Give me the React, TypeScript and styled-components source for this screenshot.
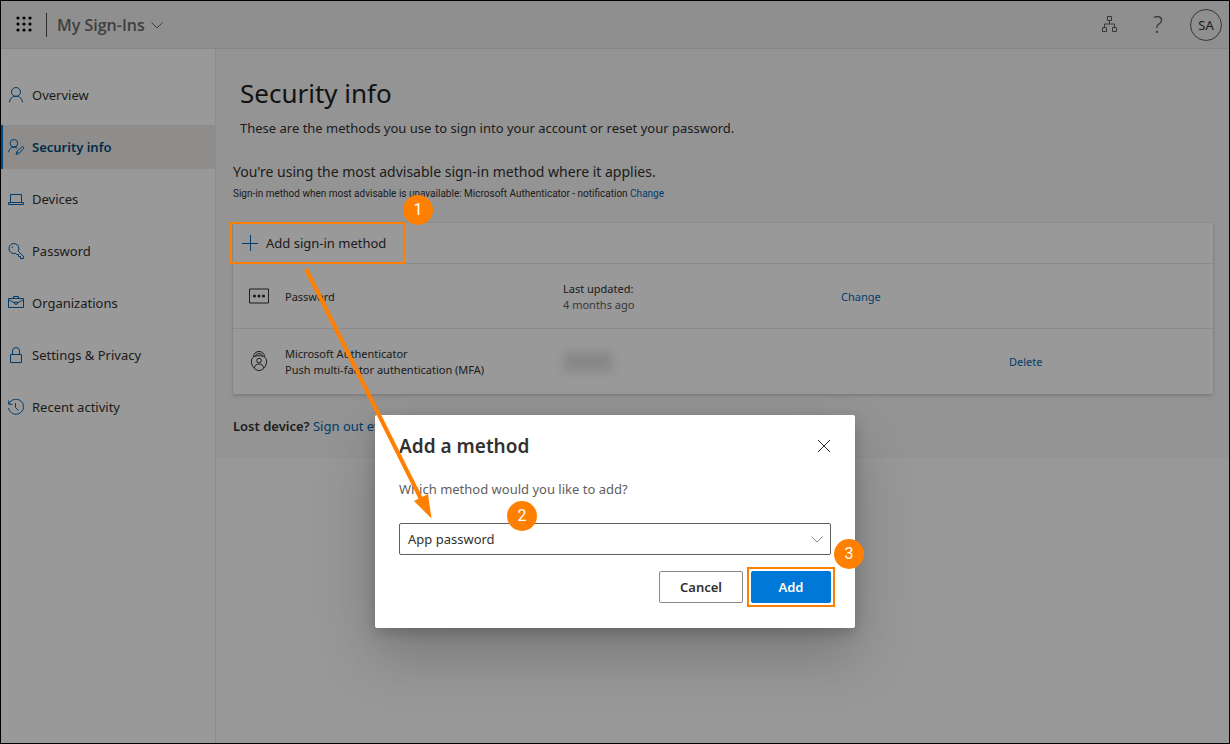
import React from "react";
import styled, { createGlobalStyle, css } from "styled-components";

const blue = "#0067b8";
const orange = "#ff8000";

const GlobalStyle = createGlobalStyle`
  * { box-sizing: border-box; }
  body {
    margin: 0;
    font-family: "Noto Sans", "Open Sans", sans-serif;
    font-size: 13px;
    line-height: 20px;
    color: #323130;
  }
  button, select, input { font: inherit; color: inherit; }
  h1, h2, p { margin: 0; font-weight: 400; }
  a { color: ${blue}; text-decoration: none; }
`;

const Frame = styled.div`
  position: relative;
  display: flex;
  flex-direction: column;
  min-height: 100vh;
  border: 1px solid #000;
  background: #fefefe;
`;

const IconButton = styled.button`
  display: flex;
  align-items: center;
  justify-content: center;
  width: 48px;
  height: 46px;
  padding: 0;
  border: 0;
  background: none;
  cursor: pointer;
`;

const Header = styled.header`
  display: flex;
  align-items: center;
  height: 48px;
  border-bottom: 1px solid #e1e1e1;
  background: #eeeeee;
  padding-right: 7px;
`;

const HeaderIconButton = styled(IconButton)`
  align-self: flex-start;
  color: #605e5c;
`;

const Launcher = styled(HeaderIconButton)`
  width: 45px;
  color: #000;
`;

const HeaderDivider = styled.span`
  width: 1px;
  height: 24px;
  background: #4a4a4a;
`;

const AppSwitcher = styled.button`
  display: flex;
  align-items: center;
  gap: 6px;
  margin-right: auto;
  padding: 0 10px;
  border: 0;
  background: none;
  font-family: "Open Sans", sans-serif;
  font-size: 16px;
  font-weight: 600;
  color: #6c6a68;
  svg { margin-top: 2px; }
`;

const HelpButton = styled(HeaderIconButton)`
  font-size: 23px;
  font-weight: 300;
`;

const Avatar = styled.button`
  width: 32px;
  height: 32px;
  margin-left: 8px;
  padding: 0;
  border: 1px solid #605e5c;
  border-radius: 50%;
  background: none;
  font-size: 13px;
`;

const Body = styled.div`
  display: flex;
  flex: 1;
`;

const Sidebar = styled.nav`
  display: flex;
  flex-direction: column;
  flex: none;
  gap: 8px;
  width: 215px;
  padding-top: 24px;
  border-right: 1px solid #ececec;
  background: #fff;
`;

const NavItem = styled.a<{ $active?: boolean }>`
  display: flex;
  align-items: center;
  gap: 8px;
  height: 44px;
  padding-left: 7px;
  color: #323130;
  ${(p) =>
    p.$active &&
    css`
      padding-left: 5px;
      border-left: 2px solid #0078d4;
      background: #edebe9;
      font-weight: 600;
      color: #004a7c;
    `}
  svg { flex: none; color: #0065b3; }
`;

const Main = styled.main`
  flex: 1;
  min-width: 0;
`;

const Content = styled.div`
  padding: 24px 16px 22px 17px;
  background: #f7f7f7;
`;

const PageHeading = styled.div`
  padding-left: 7px;
`;

const Title = styled.h1`
  font-size: 26px;
  line-height: 40px;
  color: #201f1e;
`;

const Lead = styled.p`
  margin-top: 5px;
  line-height: 20px;
`;

const Recommendation = styled.p`
  margin-top: 24px;
  font-size: 14px;
  line-height: 20px;
`;

const SmallNote = styled.p`
  margin-top: 4px;
  font-family: Roboto, sans-serif;
  font-size: 10px;
  line-height: 16px;
`;

const Card = styled.section`
  margin-top: 21px;
  background: #fff;
  box-shadow: 0 2px 4px rgba(0, 0, 0, 0.14), 0 0 2px rgba(0, 0, 0, 0.12);
`;

const AddMethodButton = styled.button`
  display: flex;
  align-items: center;
  gap: 8px;
  height: 40px;
  padding: 0 14px 0 9px;
  border: 0;
  background: none;
  svg { color: #0065b3; }
`;

const MethodTable = styled.table`
  width: 100%;
  border-collapse: collapse;
  table-layout: fixed;
  font-size: 11px;
  line-height: 16px;
  td {
    height: 65px;
    padding: 2px 0 0;
    border-top: 1px solid #e8e8e8;
  }
  td:first-child { padding: 0 0 0 16px; }
  svg { display: block; }
`;

const Muted = styled.span`
  color: #605e5c;
`;

const Redacted = styled.span`
  display: block;
  width: 50px;
  height: 20px;
  background: #e2e2e2;
  filter: blur(5px);
`;

const LostDevice = styled.p`
  margin-top: 22px;
  b { font-weight: 600; }
`;

const Scrim = styled.div`
  position: absolute;
  inset: 0;
  display: flex;
  justify-content: center;
  align-items: flex-start;
  padding-top: 414px;
  background: rgba(0, 0, 0, 0.4);
`;

const Dialog = styled.section`
  position: relative;
  width: 480px;
  padding: 16px 24px 25px;
  border-radius: 2px;
  background: #fff;
  box-shadow: 0 26px 58px rgba(0, 0, 0, 0.22), 0 5px 14px rgba(0, 0, 0, 0.18);
`;

const DialogHeader = styled.div`
  display: flex;
  align-items: center;
  justify-content: space-between;
  height: 30px;
`;

const DialogTitle = styled.h2`
  font-size: 19px;
  font-weight: 600;
  line-height: 28px;
`;

const CloseButton = styled(IconButton)`
  width: 14px;
  height: 30px;
`;

const DialogLabel = styled.label`
  display: block;
  margin: 18px 0 24px;
  color: #605e5c;
`;

const SelectBox = styled.div`
  display: grid;
  align-items: center;
  select {
    grid-area: 1 / 1;
    width: 100%;
    height: 32px;
    padding: 0 32px 0 8px;
    border: 1px solid #605e5c;
    border-radius: 2px;
    background: #fff;
    appearance: none;
  }
  svg {
    grid-area: 1 / 1;
    justify-self: end;
    margin-right: 8px;
    pointer-events: none;
    color: #8a8886;
  }
`;

const DialogActions = styled.div`
  display: flex;
  justify-content: flex-end;
  gap: 8px;
  margin-top: 16px;
`;

const ActionButton = styled.button<{ $primary?: boolean }>`
  height: 32px;
  width: ${(p) => (p.$primary ? 80 : 84)}px;
  padding: 0;
  border: 1px solid ${(p) => (p.$primary ? "#0078d7" : "#8a8886")};
  border-radius: 2px;
  background: ${(p) => (p.$primary ? "#0078d7" : "#fff")};
  color: ${(p) => (p.$primary ? "#fff" : "#323130")};
  font-weight: 600;
`;

const Annotations = styled.div`
  position: absolute;
  inset: 0;
  pointer-events: none;
  svg { position: absolute; left: 0; top: 0; }
`;

const Highlight = styled.span<{ $x: number; $y: number; $w: number; $h: number }>`
  position: absolute;
  left: ${(p) => p.$x}px;
  top: ${(p) => p.$y}px;
  width: ${(p) => p.$w}px;
  height: ${(p) => p.$h}px;
  border: 2px solid ${orange};
`;

const StepPin = styled.span<{ $x: number; $y: number }>`
  position: absolute;
  left: ${(p) => p.$x}px;
  top: ${(p) => p.$y}px;
  width: 30px;
  height: 30px;
  border-radius: 50%;
  background: ${orange};
  color: #fff;
  font-family: Roboto, sans-serif;
  font-size: 16px;
  line-height: 30px;
  text-align: center;
`;

type IconProps = { size?: number; children: React.ReactNode };

const Icon = ({ size = 16, children }: IconProps) => (
  <svg width={size} height={size} viewBox={`0 0 ${size} ${size}`} fill="none" stroke="currentColor" strokeWidth="1" aria-hidden="true">
    {children}
  </svg>
);

const PersonIcon = () => (
  <Icon>
    <circle cx="8" cy="5" r="4.5" />
    <path d="M1.5 15.5a6.5 6.5 0 0 1 13 0" />
  </Icon>
);

const PersonEditIcon = () => (
  <Icon>
    <circle cx="5.9" cy="4.3" r="3.8" />
    <path d="M.5 13.2A5.5 5.5 0 0 1 9.4 9.3" />
    <path d="M8 15.4l.8-2.8 5-4.6a1.2 1.2 0 0 1 1.7 1.8l-4.8 4.8zM8.8 12.6l1.9 2" />
  </Icon>
);

const LaptopIcon = () => (
  <Icon>
    <path d="M2.5 11.5v-8h11v8M.5 13.5v-2h15v2z" />
  </Icon>
);

const KeyIcon = () => (
  <Icon>
    <path d="M10.2 8.1L15.5 13.3v2.2h-3v-2h-2v-2h-2L7.4 10.3A5 5 0 1 1 10.2 8.1z" />
    <circle cx="4.2" cy="4.2" r=".7" fill="currentColor" stroke="none" />
  </Icon>
);

const BriefcaseIcon = () => (
  <Icon>
    <path d="M.5 3.5h15v9H.5zM5.5 3.5v-2h5v2M.5 4.7l5.8 3.1M15.5 4.7L9.7 7.8M6.3 7.2h3.4v.8a1.7 1.3 0 0 1-3.4 0z" />
  </Icon>
);

const LockIcon = () => (
  <Icon>
    <path d="M2.5 7.5h11v8h-11zM4.5 7.5V4a3.5 3.5 0 0 1 7 0v3.5" />
  </Icon>
);

const HistoryIcon = () => (
  <Icon>
    <path d="M1 5A7.5 7.5 0 1 1 .6 9M.7 1.5v3.8h3.8M7.5 4v4.5l3 3" />
  </Icon>
);

const ChevronIcon = () => (
  <svg width="12" height="7" viewBox="0 0 12 7" fill="none" stroke="currentColor" aria-hidden="true">
    <path d="M.5.5L6 6 11.5.5" />
  </svg>
);

const WaffleIcon = () => (
  <Icon>
    <g fill="currentColor" stroke="none">
      {[2, 8, 14].map((y) => [2, 8, 14].map((x) => <circle key={`${x}-${y}`} cx={x} cy={y} r="1.6" />))}
    </g>
  </Icon>
);

const OrgIcon = () => (
  <Icon>
    <path d="M5.5 .5h4v4h-4zM.5 11.500h4v4h-4zM10.500 11.500h4v4h-4zM7.500 4.500v3.500M2.500 11.500V8h10v3.500" />
  </Icon>
);

const PlusIcon = () => (
  <Icon>
    <path d="M8.5 0v16M0 8.5h16" />
  </Icon>
);

const PasswordIcon = () => (
  <svg width="20" height="16" viewBox="0 0 20 16" fill="none" stroke="currentColor" aria-hidden="true">
    <path d="M.5 1h19v14H.5z" />
    <g fill="currentColor" stroke="none">
      <circle cx="5.5" cy="8" r="1.6" />
      <circle cx="10" cy="8" r="1.6" />
      <circle cx="14.5" cy="8" r="1.6" />
    </g>
  </svg>
);

const AuthenticatorIcon = () => (
  <Icon size={20}>
    <path d="M4.300 5.800C4.800 2.500 7 .5 10 .5s5.200 2 5.700 5.300" />
    <path d="M6.300 5C6.900 3.500 8.200 2.700 10 2.700s3.100.8 3.700 2.300" />
    <path d="M10 4.700c4.500 0 7.600 2 7.600 5.400 0 4.900-3.400 9.400-7.600 9.400S2.400 15 2.400 10.100c0-3.400 3.100-5.400 7.600-5.400z" />
    <circle cx="10" cy="9.600" r="2.300" />
    <path d="M5.200 17c.6-2.600 2.400-4 4.800-4s4.200 1.400 4.800 4" />
  </Icon>
);

const CloseIcon = () => (
  <Icon size={14}>
    <path d="M1 1l12 12M13 1L1 13" />
  </Icon>
);

const navItems = [
  { label: "Overview", icon: <PersonIcon /> },
  { label: "Security info", icon: <PersonEditIcon />, active: true },
  { label: "Devices", icon: <LaptopIcon /> },
  { label: "Password", icon: <KeyIcon /> },
  { label: "Organizations", icon: <BriefcaseIcon /> },
  { label: "Settings & Privacy", icon: <LockIcon /> },
  { label: "Recent activity", icon: <HistoryIcon /> },
];

export default function App() {
  return (
    <Frame>
      <GlobalStyle />
      <Header>
        <Launcher aria-label="App launcher"><WaffleIcon /></Launcher>
        <HeaderDivider />
        <AppSwitcher>My Sign-Ins <ChevronIcon /></AppSwitcher>
        <HeaderIconButton aria-label="Organizations"><OrgIcon /></HeaderIconButton>
        <HelpButton aria-label="Help">?</HelpButton>
        <Avatar>SA</Avatar>
      </Header>
      <Body>
        <Sidebar>
          {navItems.map((item) => (
            <NavItem key={item.label} href="#" $active={item.active}>
              {item.icon}
              {item.label}
            </NavItem>
          ))}
        </Sidebar>
        <Main>
          <Content>
            <PageHeading>
              <Title>Security info</Title>
              <Lead>These are the methods you use to sign into your account or reset your password.</Lead>
            </PageHeading>
            <Recommendation>You're using the most advisable sign-in method where it applies.</Recommendation>
            <SmallNote>
              Sign-in method when most advisable is unavailable: Microsoft Authenticator - notification <a href="#">Change</a>
            </SmallNote>
            <Card>
              <AddMethodButton><PlusIcon />Add sign-in method</AddMethodButton>
              <MethodTable>
                <colgroup>
                  <col width="52" />
                  <col width="278" />
                  <col width="278" />
                  <col width="168" />
                  <col />
                </colgroup>
                <tbody>
                  <tr>
                    <td><PasswordIcon /></td>
                    <td>Password</td>
                    <td>Last updated:<br /><Muted>4 months ago</Muted></td>
                    <td><a href="#">Change</a></td>
                    <td />
                  </tr>
                  <tr>
                    <td><AuthenticatorIcon /></td>
                    <td>Microsoft Authenticator<br />Push multi-factor authentication (MFA)</td>
                    <td><Redacted /></td>
                    <td />
                    <td><a href="#">Delete</a></td>
                  </tr>
                </tbody>
              </MethodTable>
            </Card>
            <LostDevice><b>Lost device?</b> <a href="#">Sign out everywhere</a></LostDevice>
          </Content>
        </Main>
      </Body>
      <Scrim>
        <Dialog role="dialog" aria-labelledby="dialog-title">
          <DialogHeader>
            <DialogTitle id="dialog-title">Add a method</DialogTitle>
            <CloseButton aria-label="Close"><CloseIcon /></CloseButton>
          </DialogHeader>
          <DialogLabel htmlFor="method">Which method would you like to add?</DialogLabel>
          <SelectBox>
            <select id="method" defaultValue="App password">
              <option>App password</option>
            </select>
            <ChevronIcon />
          </SelectBox>
          <DialogActions>
            <ActionButton>Cancel</ActionButton>
            <ActionButton $primary>Add</ActionButton>
          </DialogActions>
          <Highlight $x={372} $y={152} $w={88} $h={40} />
          <StepPin $x={132} $y={86}>2</StepPin>
          <StepPin $x={459} $y={124}>3</StepPin>
        </Dialog>
      </Scrim>
      <Annotations>
        <Highlight $x={229} $y={221} $w={175} $h={42} />
        <StepPin $x={402} $y={194}>1</StepPin>
        <svg width="440" height="530" viewBox="0 0 440 530" aria-hidden="true">
          <path d="M305 268L420 498" stroke={orange} strokeWidth="4" />
          <path d="M430.500 517.500L413 500l14-7z" fill={orange} />
        </svg>
      </Annotations>
    </Frame>
  );
}
